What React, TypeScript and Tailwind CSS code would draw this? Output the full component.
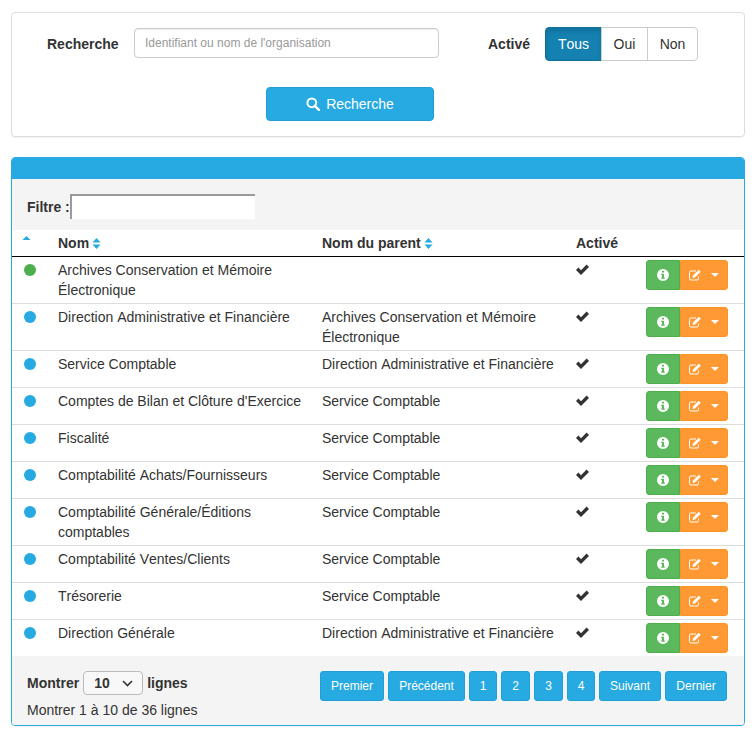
import React from "react";

const rows: [string, string, boolean?][] = [
  ["Archives Conservation et Mémoire Électronique", "", true],
  ["Direction Administrative et Financière", "Archives Conservation et Mémoire Électronique"],
  ["Service Comptable", "Direction Administrative et Financière"],
  ["Comptes de Bilan et Clôture d'Exercice", "Service Comptable"],
  ["Fiscalité", "Service Comptable"],
  ["Comptabilité Achats/Fournisseurs", "Service Comptable"],
  ["Comptabilité Générale/Éditions comptables", "Service Comptable"],
  ["Comptabilité Ventes/Clients", "Service Comptable"],
  ["Trésorerie", "Service Comptable"],
  ["Direction Générale", "Direction Administrative et Financière"],
];

function SortIcon() {
  return (
    <svg width="9" height="13" viewBox="0 0 9 13" className="ml-[3px] inline-block align-[-2px]">
      <path d="M0.5 5.5 L4.5 1 L8.5 5.5 Z M0.5 7.5 L8.5 7.5 L4.5 12 Z" fill="#27aae1" />
    </svg>
  );
}

function SearchIcon() {
  return (
    <svg width="14" height="14" viewBox="0 0 14 14" fill="none" stroke="white">
      <circle cx="5.8" cy="5.8" r="4.4" strokeWidth="2" />
      <path d="M8.8 8.8 L12.8 12.8" strokeWidth="2.4" strokeLinecap="round" />
    </svg>
  );
}

function CheckIcon() {
  return (
    <svg width="13" height="11" viewBox="0 0 13 11" className="mt-[4px] block">
      <path d="M0 6 L2.4 3.6 L5 6.2 L10.6 0.6 L13 3 L5 11 Z" fill="#333" />
    </svg>
  );
}

function InfoIcon() {
  return (
    <svg width="12" height="12" viewBox="0 0 12 12">
      <path
        fillRule="evenodd"
        fill="white"
        d="M6 0 A6 6 0 1 1 6 12 A6 6 0 1 1 6 0 Z M5 1.8 V3.6 H7 V1.8 Z M4.2 4.8 V5.9 H5 V8.5 H4.2 V9.8 H7.8 V8.5 H7 V4.8 Z"
      />
    </svg>
  );
}

function EditIcon() {
  return (
    <svg width="13" height="12" viewBox="0 0 13 12" fill="none">
      <path d="M9.5 7.5 V9.5 A1.5 1.5 0 0 1 8 11 H2 A1.5 1.5 0 0 1 0.5 9.5 V3.5 A1.5 1.5 0 0 1 2 2 H7" stroke="white" strokeWidth="1" />
      <path d="M4 6.5 L9.8 0.7 L11.8 2.7 L6 8.5 L3.6 9 Z" fill="white" />
    </svg>
  );
}

const pages = [
  ["Premier", "w-[64px]"],
  ["Précédent", "w-[77px]"],
  ["1", "w-[28px]"],
  ["2", "w-[29px]"],
  ["3", "w-[29px]"],
  ["4", "w-[28px]"],
  ["Suivant", "w-[62px]"],
  ["Dernier", "w-[62px]"],
];

export default function App() {
  return (
    <div className="w-[754px] h-[738px] overflow-hidden bg-white pt-3 pl-[11px] pr-[9px] text-sm leading-5 text-[#333] [font-kerning:none] font-['Liberation_Sans',Arial,sans-serif]">
      <div className="h-[125px] rounded border border-[#ddd] shadow-[0_1px_1px_rgba(0,0,0,0.05)]">
        <div className="flex items-start pt-[14px] pl-[35px]">
          <label className="font-bold mt-[7px] w-[87px]">Recherche</label>
          <input
            readOnly
            placeholder="Identifiant ou nom de l'organisation"
            className="w-[305px] h-[30px] mt-px rounded border border-[#ccc] px-[10px] text-xs leading-[18px] bg-white shadow-[inset_0_1px_1px_rgba(0,0,0,0.075)] placeholder:text-[#999] outline-none"
          />
          <label className="font-bold ml-[49px] mt-[7px] w-[57px]">Activé</label>
          <div className="flex h-[34px] text-center">
            <div className="w-[57px] rounded-l bg-[#1481b1] border border-[#10709a] text-white leading-[32px] shadow-[inset_0_3px_5px_rgba(0,0,0,0.125)]">Tous</div>
            <div className="w-[47px] -ml-px border border-[#ccc] leading-[32px]">Oui</div>
            <div className="w-[51px] -ml-px rounded-r border border-[#ccc] leading-[32px]">Non</div>
          </div>
        </div>
        <div className="mt-[26px] ml-[254px] w-[168px] h-[34px] rounded bg-[#27aae1] border border-[#1f9fd6] text-white flex items-center justify-center gap-[6px]">
          <SearchIcon />
          <span>Recherche</span>
        </div>
      </div>

      <div className="mt-[20px] h-[569px] rounded border border-[#27aae1] shadow-[0_1px_1px_rgba(0,0,0,0.05)] flex flex-col overflow-hidden">
        <div className="h-[21px] shrink-0 bg-[#27aae1]" />
        <div className="h-[51px] shrink-0 bg-[#f4f4f4] flex items-center pl-[15px] pt-[4px]">
          <label className="font-bold">Filtre :</label>
          <input readOnly className="w-[185px] h-[25px] bg-white border-t-2 border-l-2 border-t-[#9a9a9a] border-l-[#9a9a9a] outline-none" />
        </div>
        <table className="w-[732px] table-fixed border-collapse">
          <colgroup>
            <col className="w-[38px]" />
            <col className="w-[264px]" />
            <col className="w-[254px]" />
            <col className="w-[70px]" />
            <col />
          </colgroup>
          <thead>
            <tr className="h-[26px] border-b border-black font-bold text-left">
              <th className="pl-[10px] align-top pt-[2px]">
                <svg width="9" height="6" viewBox="0 0 9 6" className="mt-[3px]">
                  <path d="M0.5 5 L4.5 1 L8.5 5 Z" fill="#27aae1" />
                </svg>
              </th>
              <th className="pl-2 pt-[3px] pb-[3px]">Nom<SortIcon /></th>
              <th className="pl-2 pt-[3px] pb-[3px]">Nom du parent<SortIcon /></th>
              <th className="pl-2 pt-[3px] pb-[3px]">Activé</th>
              <th />
            </tr>
          </thead>
          <tbody>
            {rows.map(([nom, parent, green], i) => (
              <tr key={i} className="border-b border-[#ddd] last:border-b-0 align-top">
                <td className="py-[3px] pl-3">
                  <div className={`w-3 h-3 mt-[4px] rounded-full ${green ? "bg-[#4cae4c]" : "bg-[#27aae1]"}`} />
                </td>
                <td className="py-[3px] pl-2 pr-2">{nom}</td>
                <td className="py-[3px] pl-2 pr-2">{parent}</td>
                <td className="py-[3px] pl-2">
                  <CheckIcon />
                </td>
                <td className="py-[3px] pl-2">
                  <div className="flex h-[30px] w-[82px] text-white">
                    <div className="w-[34px] rounded-l-[3px] bg-[#5cb85c] border border-[#4cae4c] flex items-center justify-center">
                      <InfoIcon />
                    </div>
                    <div className="w-[48px] rounded-r-[3px] bg-[#ff9933] border border-[#ff9224] flex items-center pl-[8px]">
                      <EditIcon />
                      <span className="ml-[9px] w-0 h-0 border-x-4 border-x-transparent border-t-4 border-t-white" />
                    </div>
                  </div>
                </td>
              </tr>
            ))}
          </tbody>
        </table>
        <div className="flex-1 bg-[#f4f4f4] flex items-start">
          <div className="pl-[15px] pt-[15px]">
            <div className="flex items-center font-bold h-6">
              <span>Montrer</span>
              <div className="ml-1 mr-1 w-[60px] h-6 rounded border border-[#bbb] bg-[#f8f8f8] flex items-center justify-between pl-[10px] pr-[9px]">
                <span>10</span>
                <svg width="11" height="7" viewBox="0 0 11 7">
                  <path d="M1 1 L5.5 5.5 L10 1" fill="none" stroke="#333" strokeWidth="1.6" />
                </svg>
              </div>
              <span>lignes</span>
            </div>
            <div className="mt-[5px]">Montrer 1 à 10 de 36 lignes</div>
          </div>
          <div className="ml-auto mr-[17px] mt-[15px] flex gap-1">
            {pages.map(([p, w]) => (
              <div key={p} className={`${w} h-[30px] rounded-[3px] bg-[#27aae1] border border-[#1f9fd6] text-white text-xs leading-[28px] text-center`}>{p}</div>
            ))}
          </div>
        </div>
      </div>
    </div>
  );
}
